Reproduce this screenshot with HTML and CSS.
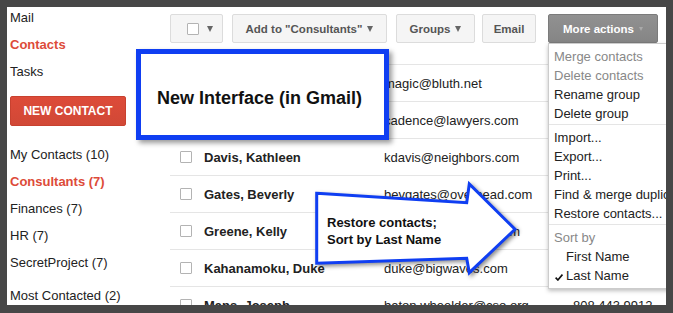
FILE: index.html
```html
<!DOCTYPE html>
<html lang="en">
<head>
  <meta charset="UTF-8" />
  <meta name="viewport" content="width=device-width, initial-scale=1.0"/>
  <title>Contacts - New Interface</title>
  <link rel="stylesheet" href="styles.css">
</head>
<body>
  <div class="frame">

    <div class="sidebar">
      <div class="nav-item">Mail</div>
      <div class="nav-item active">Contacts</div>
      <div class="nav-item">Tasks</div>
      <button class="new-contact">NEW CONTACT</button>
      <div class="nav-item">My Contacts (10)</div>
      <div class="nav-item active">Consultants (7)</div>
      <div class="nav-item">Finances (7)</div>
      <div class="nav-item">HR (7)</div>
      <div class="nav-item">SecretProject (7)</div>
      <div class="nav-item most">Most Contacted (2)</div>
    </div>

    <div class="main">
      <div class="toolbar">
        <div class="btn btn-select"><span class="checkbox"></span><span class="caret"></span></div>
        <div class="btn btn-add">Add to "Consultants"<span class="caret"></span></div>
        <div class="btn btn-groups">Groups<span class="caret"></span></div>
        <div class="btn btn-email">Email</div>
        <div class="btn btn-more">More actions<span class="caret"></span></div>
      </div>

      <div class="list">
        <div class="row"><span class="checkbox"></span><span class="name">Bluth, Gob</span><span>magic@bluth.net</span><span>808 555 0142</span></div>
        <div class="row"><span class="checkbox"></span><span class="name">Cadence, Maria</span><span>cadence@lawyers.com</span><span>808 555 0187</span></div>
        <div class="row"><span class="checkbox"></span><span class="name">Davis, Kathleen</span><span>kdavis@neighbors.com</span><span>808 555 0113</span></div>
        <div class="row"><span class="checkbox"></span><span class="name">Gates, Beverly</span><span>bevgates@overhead.com</span><span>808 555 0164</span></div>
        <div class="row"><span class="checkbox"></span><span class="name">Greene, Kelly</span><span>kelly@greenhouse.com</span><span>808 555 0129</span></div>
        <div class="row"><span class="checkbox"></span><span class="name">Kahanamoku, Duke</span><span>duke@bigwaves.com</span><span>808 555 0176</span></div>
        <div class="row"><span class="checkbox"></span><span class="name">Mans, Joseph</span><span>baton.wheelder@cso.org</span><span>808 443 9912</span></div>
      </div>
    </div>

    <!-- dropdown under "More actions" -->
    <div class="menu">
      <div class="menu-item disabled">Merge contacts</div>
      <div class="menu-item disabled">Delete contacts</div>
      <div class="menu-item">Rename group</div>
      <div class="menu-item">Delete group</div>
      <div class="menu-sep"></div>
      <div class="menu-item">Import...</div>
      <div class="menu-item">Export...</div>
      <div class="menu-item">Print...</div>
      <div class="menu-item">Find &amp; merge duplicates...</div>
      <div class="menu-item">Restore contacts...</div>
      <div class="menu-sep"></div>
      <div class="menu-item disabled">Sort by</div>
      <div class="menu-item sub">First Name</div>
      <div class="menu-item checked">
        <svg class="check" width="8" height="7" viewBox="0 0 8 7"><path d="M0.6 3.6 L2.9 6 L7.4 0.6" fill="none" stroke="#111" stroke-width="1.6"/></svg>Last Name
      </div>
    </div>

    <!-- annotations -->
    <div class="callout">New Interface (in Gmail)</div>

    <div class="arrow">
      <svg class="arrow-shape" width="230" height="110" viewBox="0 0 230 110">
        <polygon points="16.7,18.3 166.7,27.7 169.3,9 215,54.3 169.3,97.7 166.7,83.3 16.7,88.3"
                 fill="#fff" stroke="#0f3ef2" stroke-width="3" stroke-linejoin="miter"/>
      </svg>
      <div class="arrow-text">Restore contacts;<br>Sort by Last Name</div>
    </div>

  </div>
</body>
</html>
```

FILE: styles.css
```css
body {
  margin: 0;
  background-color: #474747;
  font-family: "Liberation Sans", Arial, sans-serif;
  font-size: 13px;
  color: #222;
}
.frame {
  position: relative;
  display: flex;
  width: 659px;
  height: 298px;
  margin: 7px 0 0 7px;
  background-color: #fff;
  overflow: hidden;
}

/* left column */
.sidebar {
  flex: none;
  width: 163px;
  box-sizing: border-box;
  padding: 3px 0 0 3px;
  display: flex;
  flex-direction: column;
  align-items: flex-start;
}
.sidebar > * {
  flex-shrink: 0;
}
.nav-item {
  line-height: 16px;
  margin-bottom: 10.8px;
  white-space: nowrap;
}
.nav-item.active {
  color: #dd4b39;
  font-weight: bold;
}
.nav-item.most {
  margin-top: 7px;
}
.new-contact {
  width: 116px;
  height: 30px;
  margin: 6px 0 21px;
  padding: 0;
  border: 1px solid #c8412f;
  border-radius: 2px;
  background: linear-gradient(#dd4b39, #d14836);
  color: #fff;
  font-family: "Liberation Sans", Arial, sans-serif;
  font-size: 12px;
  font-weight: bold;
}

/* toolbar */
.main {
  flex: 1;
  min-width: 0;
}
.toolbar {
  display: flex;
  padding-top: 7px;
}
.btn {
  flex: none;
  box-sizing: border-box;
  height: 29px;
  display: flex;
  align-items: center;
  justify-content: center;
  gap: 5px;
  background-color: #f5f5f5;
  border: 1px solid #dcdcdc;
  border-radius: 2px;
  color: #555;
  font-size: 11.5px;
  font-weight: bold;
  white-space: nowrap;
}
.caret {
  width: 0;
  height: 0;
  border-style: solid;
  border-width: 6px 3.5px 0;
  border-color: #666 transparent transparent;
}
.btn-select {
  width: 53px;
  margin-right: 9px;
  justify-content: flex-start;
  padding-left: 16px;
  gap: 8px;
}
.btn-add {
  width: 155px;
  margin-right: 9px;
}
.btn-groups {
  width: 79px;
  margin-right: 7px;
}
.btn-email {
  width: 54px;
  margin-right: 12px;
}
.btn-more {
  width: 110px;
  background: linear-gradient(#919191, #858585);
  border-color: #7b7b7b;
  color: #fff;
}
.btn-more .caret {
  border-width: 4px 2.5px 0;
  border-color: #a9a9a9 transparent transparent;
}
.checkbox {
  display: inline-block;
  box-sizing: border-box;
  width: 12px;
  height: 12px;
  background-color: #fff;
  border: 1px solid #b3b3b3;
  border-radius: 1px;
}

/* contact rows */
.list {
  margin-top: 21px;
}
.row {
  display: grid;
  grid-template-columns: 34px 180px 189px 1fr;
  align-items: center;
  height: 37px;
  box-sizing: border-box;
  border-top: 1px solid #e5e5e5;
  white-space: nowrap;
}
.row .checkbox {
  margin-left: 10px;
}
.row .name {
  font-weight: bold;
}

/* More actions menu */
.menu {
  position: absolute;
  left: 541px;
  top: 36px;
  width: 150px;
  padding: 3px 0;
  background-color: #fff;
  border: 1px solid rgba(0, 0, 0, 0.2);
  box-shadow: 0 2px 4px rgba(0, 0, 0, 0.25);
}
.menu-item {
  height: 19px;
  line-height: 19px;
  padding-left: 5px;
  white-space: nowrap;
}
.menu-item.disabled {
  color: #888;
}
.menu-item.sub {
  padding-left: 17px;
}
.menu-item.checked {
  padding-left: 6px;
}
.check {
  width: 11px;
  height: 7px;
  padding-right: 3px;
  box-sizing: border-box;
  vertical-align: -1px;
}
.menu-sep {
  height: 1px;
  margin: 1px 0 3px;
  background-color: #e5e5e5;
}

/* blue annotations */
.callout {
  position: absolute;
  left: 129px;
  top: 42px;
  width: 253px;
  height: 91px;
  box-sizing: border-box;
  padding: 33px 0 0 16px;
  border: 5px solid #0f3ef2;
  background-color: #fff;
  box-shadow: 3px 3px 5px rgba(0, 0, 0, 0.4);
  font-size: 18px;
  font-weight: bold;
  line-height: 22px;
  color: #111;
}
.arrow {
  position: absolute;
  left: 293px;
  top: 168px;
  width: 230px;
  height: 110px;
}
.arrow-shape {
  position: absolute;
  left: 0;
  top: 0;
  filter: drop-shadow(2px 2px 2px rgba(0, 0, 0, 0.45));
}
.arrow-text {
  position: relative;
  padding: 39px 0 0 27px;
  font-size: 13px;
  font-weight: bold;
  line-height: 17px;
  color: #111;
}
```
